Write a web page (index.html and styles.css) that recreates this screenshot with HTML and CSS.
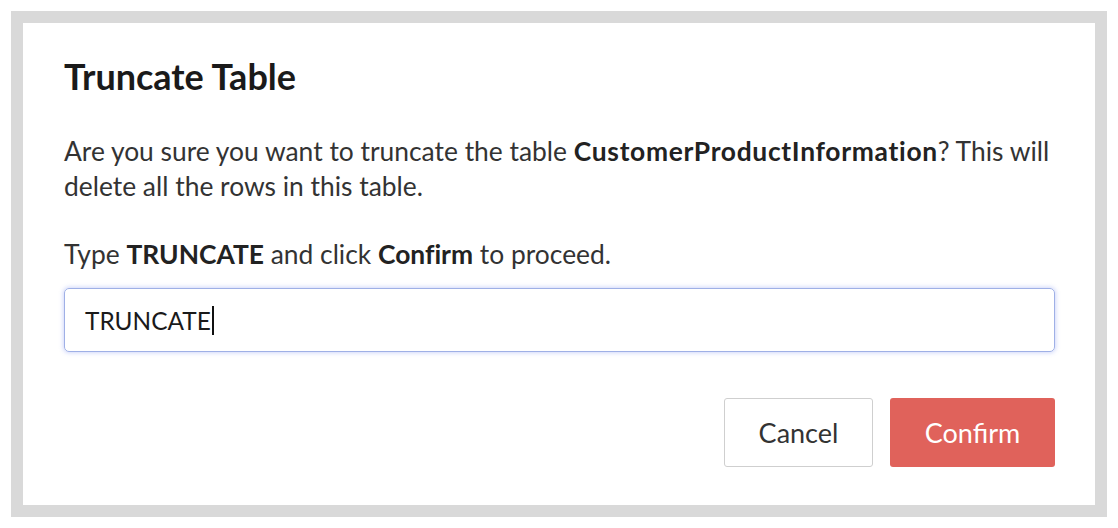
FILE: index.html
```html
<!DOCTYPE html>
<html>
<head>
<meta charset="utf-8">
<link rel="stylesheet" href="styles.css">
</head>
<body>
<div class="frame">
  <div class="dialog">
    <h1 class="title">Truncate Table</h1>
    <p class="text">Are you sure you want to truncate the table <b class="tname">CustomerProductInformation</b>? This will delete all the rows in this table.</p>
    <p class="text instr">Type <b>TRUNCATE</b> and click <b>Confirm</b> to proceed.</p>
    <div class="input"><span class="value">TRUNCATE</span><span class="caret"></span></div>
    <div class="actions">
      <button class="btn cancel">Cancel</button>
      <button class="btn confirm">Confirm</button>
    </div>
  </div>
</div>
</body>
</html>
```

FILE: styles.css
```css
html, body {
  margin: 0;
  padding: 0;
  background: #ffffff;
}
body {
  padding: 11px;
  font-family: Lato, "Noto Sans", sans-serif;
}
.frame {
  width: 1096px;
  height: 506px;
  box-sizing: border-box;
  border: 12px solid #d9d9d9;
  background: #ffffff;
}
.dialog {
  padding: 27px 40px 0 41px;
}
.title {
  margin: 0;
  font-size: 36px;
  line-height: 52px;
  font-weight: 700;
  color: #1a1a1a;
}
.text {
  margin: 32px 0 0 0;
  font-size: 26.4px;
  line-height: 35px;
  color: #333333;
}
.text b {
  font-weight: 700;
  color: #222222;
  font-variant-ligatures: no-common-ligatures;
}
.text .tname {
  letter-spacing: 0.7px;
}
.instr {
  margin-top: 33px;
}
.input {
  margin-top: 16px;
  height: 64px;
  box-sizing: border-box;
  border: 1px solid #9fb0e6;
  border-radius: 5px;
  box-shadow: 0 0 4px 1px rgba(120, 140, 240, 0.35);
  display: flex;
  align-items: center;
  padding-left: 20px;
  font-size: 24.4px;
  color: #1a1a1a;
}
.caret {
  display: inline-block;
  width: 2px;
  height: 29px;
  background: #111;
  margin-left: 1px;
}
.actions {
  display: flex;
  justify-content: flex-end;
  gap: 17px;
  margin-top: 46px;
}
.btn {
  height: 69px;
  font-family: Lato, "Noto Sans", sans-serif;
  font-size: 27px;
  border-radius: 3px;
  cursor: pointer;
}
.cancel {
  width: 149px;
  background: #ffffff;
  border: 1px solid #cfcfcf;
  color: #333333;
}
.confirm {
  width: 165px;
  background: #e0625b;
  border: none;
  color: #ffffff;
}
```
